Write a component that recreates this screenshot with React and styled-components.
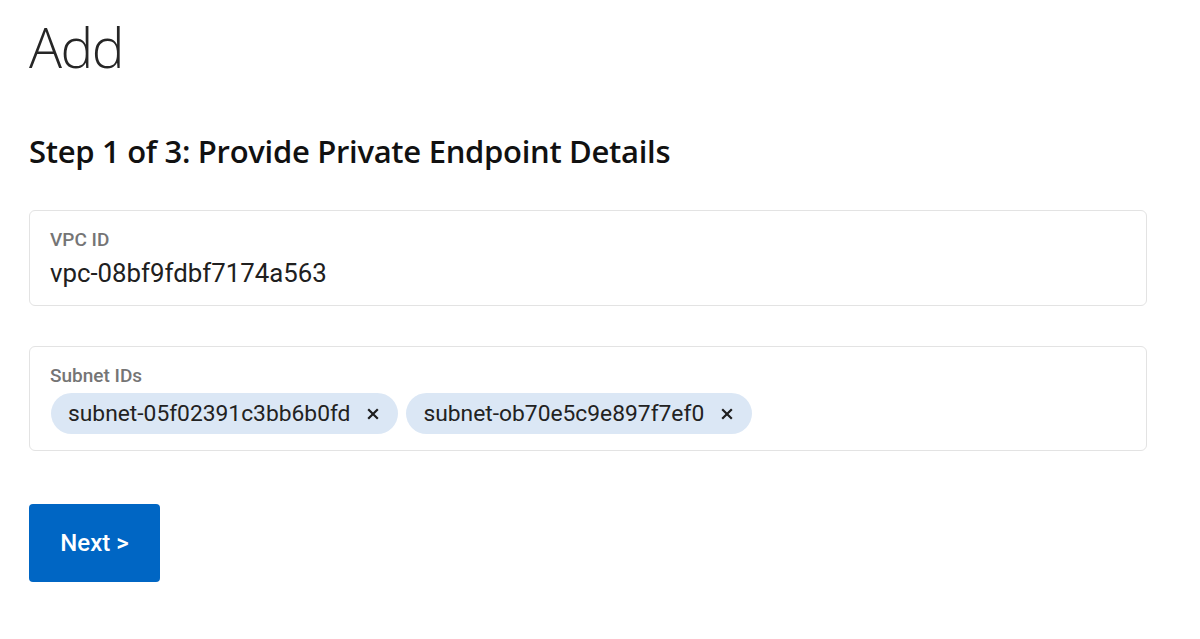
import React from "react";
import styled, { createGlobalStyle } from "styled-components";

const Global = createGlobalStyle`
  html, body { margin: 0; padding: 0; background: #fff; }
  body { font-family: Roboto, "Liberation Sans", sans-serif; color: #222; }
  * { box-sizing: border-box; }
`;

const Page = styled.div`
  padding: 14px 53px 0 29px;
  display: flex;
  flex-direction: column;
`;

const Title = styled.h1`
  margin: 0;
  font-family: "Open Sans", sans-serif;
  font-weight: 350;
  font-size: 55px;
  line-height: 66px;
  color: #262626;
  letter-spacing: -1.5px;
`;

const StepHeading = styled.h2`
  margin: 51px 0 0 0;
  font-family: "Open Sans", sans-serif;
  font-weight: 600;
  font-size: 31px;
  line-height: 40px;
  color: #111;
  letter-spacing: -0.3px;
`;

const Fields = styled.div`
  display: flex;
  flex-direction: column;
  gap: 40px;
  margin-top: 39px;
`;

const Field = styled.div`
  border: 1px solid #e3e3e3;
  border-radius: 6px;
  padding: 18px 20px 0 20px;
  height: ${(p) => p.$h}px;
  display: flex;
  flex-direction: column;
`;

const Label = styled.div`
  font-size: 19px;
  line-height: 22px;
  color: #757575;
  font-weight: 500;
`;

const Value = styled.div`
  font-size: 25.8px;
  line-height: 30px;
  margin-top: 7px;
  color: #202020;
`;

const Chips = styled.div`
  display: flex;
  gap: 8px;
  margin-top: 6px;
  margin-left: 1px;
`;

const Chip = styled.div`
  display: inline-flex;
  align-items: center;
  height: 41px;
  padding: 0 19px 0 17px;
  background: #dbe7f5;
  border-radius: 21px;
  font-size: 22.8px;
  color: #222;
  gap: 17px;
`;

const Close = styled.span`
  display: inline-flex;
  width: 12px;
  height: 12px;
`;

const Button = styled.button`
  margin-top: 53px;
  align-self: flex-start;
  width: 131px;
  height: 78px;
  border: none;
  border-radius: 4px;
  background: #0066c4;
  color: #fff;
  font-family: Roboto, sans-serif;
  font-weight: 500;
  font-size: 24px;
  padding: 0;
`;

const X = () => (
  <Close>
    <svg width="12" height="12" viewBox="0 0 12 12">
      <path d="M1.2 1.2 L10.8 10.8 M10.8 1.2 L1.2 10.8" stroke="#1e1e1e" strokeWidth="2.2" />
    </svg>
  </Close>
);

export default function App() {
  return (
    <>
      <Global />
      <Page>
        <Title>Add</Title>
        <StepHeading>Step 1 of 3: Provide Private Endpoint Details</StepHeading>
        <Fields>
          <Field $h={96}>
            <Label>VPC ID</Label>
            <Value>vpc-08bf9fdbf7174a563</Value>
          </Field>
          <Field $h={105}>
            <Label>Subnet IDs</Label>
            <Chips>
              <Chip>subnet-05f02391c3bb6b0fd<X /></Chip>
              <Chip>subnet-ob70e5c9e897f7ef0<X /></Chip>
            </Chips>
          </Field>
        </Fields>
        <Button>Next &gt;</Button>
      </Page>
    </>
  );
}
